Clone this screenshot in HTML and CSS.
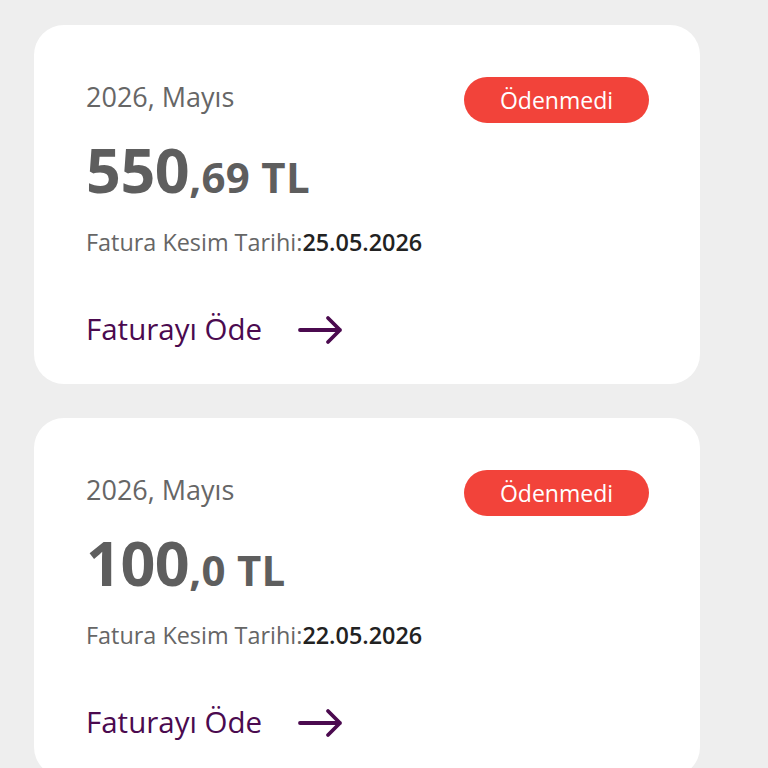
FILE: index.html
```html
<!DOCTYPE html>
<html lang="tr">
<head>
<meta charset="utf-8">
<link rel="stylesheet" href="styles.css">
</head>
<body>
<div class="list">
  <div class="card">
    <div class="head">
      <div class="period">2026, Mayıs</div>
      <div class="badge">Ödenmedi</div>
    </div>
    <div class="amount"><span class="int">550</span><span class="dec">,69 TL</span></div>
    <div class="issue">Fatura Kesim Tarihi:<b>25.05.2026</b></div>
    <div class="pay"><span>Faturayı Öde</span>
      <svg class="arrow" width="46" height="30" viewBox="0 0 46 30"><path d="M2 15 H42 M30 3 L42 15 L30 27" fill="none" stroke="#4b0a4f" stroke-width="3.8" stroke-linecap="round" stroke-linejoin="round"/></svg>
    </div>
  </div>
  <div class="card">
    <div class="head">
      <div class="period">2026, Mayıs</div>
      <div class="badge">Ödenmedi</div>
    </div>
    <div class="amount"><span class="int">100</span><span class="dec">,0 TL</span></div>
    <div class="issue">Fatura Kesim Tarihi:<b>22.05.2026</b></div>
    <div class="pay"><span>Faturayı Öde</span>
      <svg class="arrow" width="46" height="30" viewBox="0 0 46 30"><path d="M2 15 H42 M30 3 L42 15 L30 27" fill="none" stroke="#4b0a4f" stroke-width="3.8" stroke-linecap="round" stroke-linejoin="round"/></svg>
    </div>
  </div>
</div>
</body>
</html>
```
FILE: styles.css
```css
html, body {
  margin: 0;
  padding: 0;
  background: #eeeeee;
  font-family: "Open Sans", "Noto Sans", sans-serif;
  overflow: hidden;
  height: 768px;
}
.list {
  display: flex;
  flex-direction: column;
  gap: 34px;
  padding: 25px 0 0 34px;
}
.card {
  width: 666px;
  box-sizing: border-box;
  background: #ffffff;
  border-radius: 30px;
  padding: 52px 51px 35px 52px;
}
.head {
  display: flex;
  justify-content: space-between;
  align-items: center;
  height: 46px;
}
.period {
  font-size: 27px;
  line-height: 30px;
  color: #666666;
  margin-top: -6px;
}
.badge {
  width: 185px;
  height: 46px;
  border-radius: 23px;
  background: #f2433a;
  color: #ffffff;
  font-size: 23px;
  line-height: 46px;
  text-align: center;
}
.amount {
  margin-top: 17px;
  line-height: 60px;
  color: #5e5e5e;
  font-weight: 700;
}
.int { font-size: 61px; letter-spacing: -0.5px; }
.dec { font-size: 42px; letter-spacing: 0.3px; }
.issue {
  margin-top: 10px;
  font-size: 23.4px;
  line-height: 30px;
  color: #666666;
}
.issue b {
  color: #222222;
  font-weight: 600;
}
.pay {
  margin-top: 52px;
  display: flex;
  align-items: center;
  gap: 36px;
  font-size: 29.5px;
  line-height: 40px;
  color: #4b0a4f;
}
.arrow { display: block; margin-top: 1px; }
```
